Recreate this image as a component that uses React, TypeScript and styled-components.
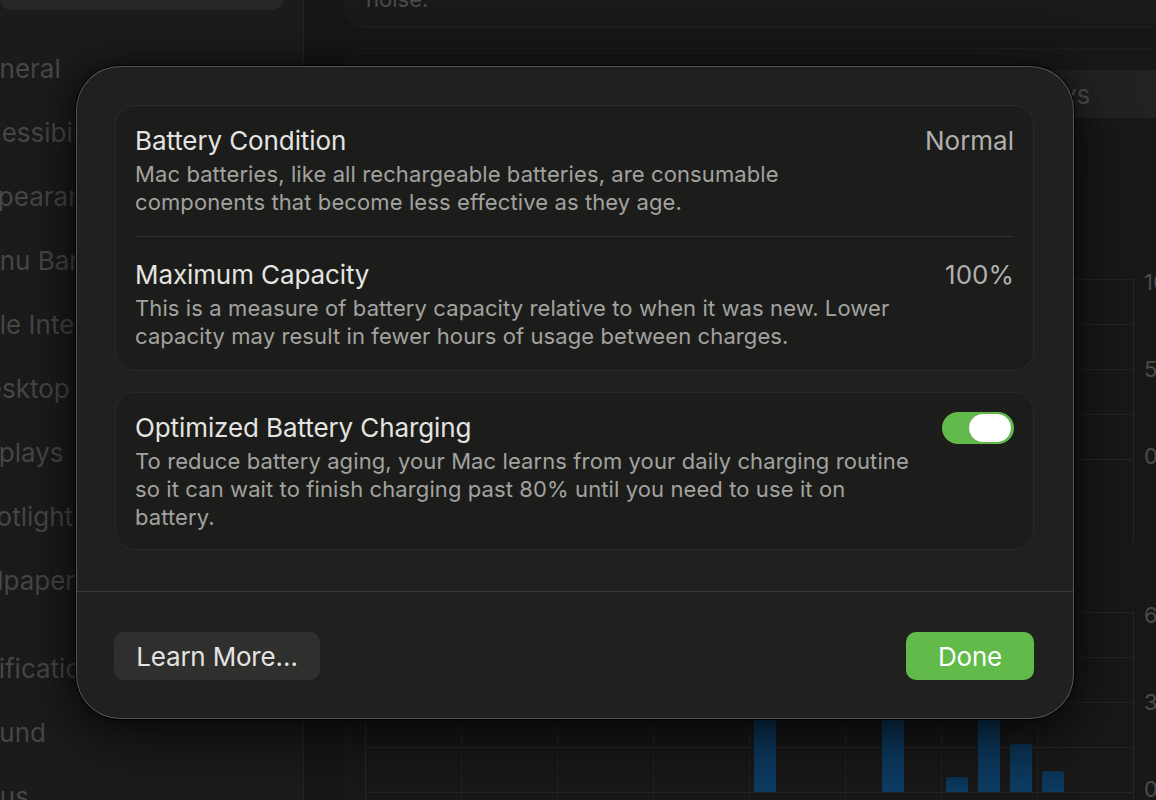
import React from "react";
import styled, { createGlobalStyle } from "styled-components";

const Global = createGlobalStyle`
  html, body { margin: 0; padding: 0; background: #151615; }
  body {
    font-family: Inter, "Noto Sans", "Liberation Sans", sans-serif;
    -webkit-font-smoothing: antialiased;
  }
  #root { width: 1156px; height: 800px; }
  * { box-sizing: border-box; }
`;

const Screen = styled.div`
  position: relative;
  width: 1156px;
  height: 800px;
  overflow: hidden;
  display: flex;
  background: #151615;
`;

/* ---------- background window: sidebar ---------- */
const Sidebar = styled.aside`
  width: 304px;
  flex: none;
  background: #1a1b1a;
  border-right: 1px solid #232423;
  display: flex;
  flex-direction: column;
  overflow: hidden;
`;

const SearchStub = styled.div`
  width: 283px;
  height: 10px;
  flex: none;
  background: #252625;
  border-radius: 0 0 12px 12px;
`;

const SideList = styled.ul`
  list-style: none;
  margin: 27px 0 0;
  padding: 0;
  display: flex;
  flex-direction: column;
`;

const SideItem = styled.li<{ $shift: number; $gapBefore?: boolean }>`
  height: 64px;
  line-height: 64px;
  font-size: 26px;
  color: #464746;
  white-space: nowrap;
  margin-left: ${(p) => -p.$shift}px;
  margin-top: ${(p) => (p.$gapBefore ? "24px" : "0")};
`;

/* ---------- background window: main ---------- */
const Main = styled.main`
  flex: 1;
  min-width: 0;
  padding-left: 41px;
  display: flex;
  flex-direction: column;
  gap: 20px;
  overflow: hidden;
`;

const TopCard = styled.div`
  flex: none;
  width: 900px;
  height: 68px;
  margin-top: -40px;
  padding: 24px 20px 0;
  background: #181918;
  border: 1px solid #1f201f;
  border-radius: 20px;
`;

const DimText = styled.div`
  font-size: 22px;
  line-height: 28px;
  color: #4a4b4a;
  white-space: nowrap;
`;

const ChartCard = styled.section`
  flex: none;
  width: 900px;
  height: 820px;
  padding: 21px 19px 0;
  background: #171817;
  border: 1px solid #1d1e1d;
  border-radius: 20px;
  display: flex;
  flex-direction: column;
`;

const Segmented = styled.div`
  width: 864px;
  height: 48px;
  flex: none;
  display: grid;
  grid-template-columns: 1fr 1fr;
  background: #212221;
  border-radius: 10px;
`;

const Segment = styled.div`
  display: flex;
  align-items: center;
  justify-content: center;
  font-size: 26px;
  color: #4d4e4d;
`;

const ChartSection = styled.div<{ $top: number }>`
  padding-top: ${(p) => p.$top}px;
  display: grid;
  grid-template-columns: 769px auto;
  column-gap: 10px;
  align-items: start;
`;

const Plot = styled.div<{ $axis: number }>`
  display: grid;
  width: 769px;
  grid-template-rows: 181px ${(p) => p.$axis}px;
`;

const HLines = styled.div`
  grid-row: 1;
  grid-column: 1;
  display: flex;
  flex-direction: column;
  border-bottom: 1px solid #252625;
`;

const HLine = styled.div`
  height: 45px;
  border-top: 1px solid #232423;
`;

const VLines = styled.div`
  grid-row: 1 / span 2;
  grid-column: 1;
  display: grid;
  grid-template-columns: repeat(8, 96px);
  border-right: 1px solid #262726;
`;

const VCol = styled.div<{ $solid?: boolean }>`
  border-left: 1px ${(p) => (p.$solid ? "solid" : "dashed")} #262726;
`;

const Bars = styled.div`
  grid-row: 1;
  grid-column: 1;
  height: 180px;
  display: grid;
  grid-template-columns: repeat(24, 32px);
  align-items: end;
`;

const Bar = styled.div`
  width: 22px;
  margin-left: 5px;
  background: linear-gradient(#0b3354, #0d3c63);
  border-radius: 3px 3px 0 0;
`;

const AxisLabels = styled.div`
  height: 196px;
  margin-top: -8px;
  display: flex;
  flex-direction: column;
  justify-content: space-between;
  font-size: 22px;
  line-height: 22px;
  color: #4b4c4b;
  white-space: nowrap;
`;

/* ---------- sheet ---------- */
const Sheet = styled.div`
  position: absolute;
  left: 76px;
  top: 66px;
  width: 998px;
  display: flex;
  flex-direction: column;
  background: #20211e;
  border: 1px solid rgba(255, 255, 255, 0.24);
  border-radius: 44px;
  box-shadow: 0 0 0 1px #000, 0 18px 60px rgba(0, 0, 0, 0.6),
    0 0 24px rgba(0, 0, 0, 0.45);
`;

const SheetBody = styled.div`
  padding: 38px 39px 41px 38px;
  display: flex;
  flex-direction: column;
  gap: 21px;
`;

const Card = styled.div`
  background: #1c1d1a;
  border: 1px solid #2a2b28;
  border-radius: 20px;
  padding: 0 19px;
  display: flex;
  flex-direction: column;
`;

const Row = styled.div<{ $pt: number; $pb: number }>`
  display: flex;
  align-items: flex-start;
  gap: 20px;
  padding: ${(p) => p.$pt}px 0 ${(p) => p.$pb}px;
`;

const RowDivider = styled.div`
  height: 1px;
  background: #30312e;
`;

const TextCol = styled.div`
  flex: 1;
  min-width: 0;
`;

const Title = styled.div`
  font-size: 26px;
  line-height: 32px;
  color: #e4e4e2;
  white-space: nowrap;
  letter-spacing: -0.1px;
`;

const Desc = styled.div`
  margin-top: 3px;
  font-size: 22px;
  line-height: 28px;
  color: #a2a2a0;
  white-space: nowrap;
  letter-spacing: 0.1px;
`;

const Value = styled.div`
  flex: none;
  font-size: 26px;
  line-height: 32px;
  color: #b0b0ae;
`;

const Toggle = styled.div<{ $on: boolean }>`
  flex: none;
  width: 72px;
  height: 32px;
  border-radius: 16px;
  padding: 2px 3px;
  background: ${(p) => (p.$on ? "#62ba4a" : "#3a3b38")};
  display: flex;
  justify-content: ${(p) => (p.$on ? "flex-end" : "flex-start")};
`;

const Knob = styled.div`
  width: 42px;
  height: 28px;
  border-radius: 14px;
  background: #ffffff;
  box-shadow: 0 0 1px rgba(0, 0, 0, 0.3);
`;

const FooterDivider = styled.div`
  height: 1px;
  background: #3b3c39;
`;

const Footer = styled.div`
  display: flex;
  justify-content: space-between;
  align-items: center;
  padding: 40px 39px 38px 37px;
`;

const Button = styled.button<{ $primary?: boolean; $w: number }>`
  width: ${(p) => p.$w}px;
  height: 48px;
  border: none;
  border-radius: 10px;
  font-family: inherit;
  font-size: 26px;
  letter-spacing: -0.2px;
  color: ${(p) => (p.$primary ? "#ffffff" : "#e4e4e2")};
  background: ${(p) => (p.$primary ? "#62ba4a" : "#2f2f2e")};
  display: flex;
  align-items: center;
  justify-content: center;
  padding: 0;
`;

const sidebarItems: { label: string; shift: number; gap?: boolean }[] = [
  { label: "General", shift: 35 },
  { label: "Accessibility", shift: 46 },
  { label: "Appearance", shift: 36 },
  { label: "Menu Bar", shift: 39 },
  { label: "Apple Intelligence", shift: 50 },
  { label: "Desktop & Dock", shift: 32 },
  { label: "Displays", shift: 40 },
  { label: "Spotlight", shift: 36 },
  { label: "Wallpaper", shift: 48 },
  { label: "Notifications", shift: 45, gap: true },
  { label: "Sound", shift: 33 },
  { label: "Focus", shift: 45 },
];

const usage: Record<number, number> = { 12: 40, 16: 45, 18: 5, 19: 33, 20: 16, 21: 7 };

function Chart({ top, axis, labels, bars }: { top: number; axis: number; labels: string[]; bars?: boolean }) {
  return (
    <ChartSection $top={top}>
      <Plot $axis={axis}>
        <HLines>
          <HLine />
          <HLine />
          <HLine />
          <HLine />
        </HLines>
        <VLines>
          {Array.from({ length: 8 }).map((_, i) => (
            <VCol key={i} $solid={i === 0} />
          ))}
        </VLines>
        {bars && (
          <Bars>
            {Array.from({ length: 24 }).map((_, i) => (
              <Bar key={i} style={{ height: (usage[i] || 0) * 3 }} />
            ))}
          </Bars>
        )}
      </Plot>
      <AxisLabels>
        {labels.map((l) => (
          <span key={l}>{l}</span>
        ))}
      </AxisLabels>
    </ChartSection>
  );
}

export default function App() {
  return (
    <>
      <Global />
      <Screen>
        <Sidebar>
          <SearchStub />
          <SideList>
            {sidebarItems.map((it) => (
              <SideItem key={it.label} $shift={it.shift} $gapBefore={it.gap}>
                {it.label}
              </SideItem>
            ))}
          </SideList>
        </Sidebar>

        <Main>
          <TopCard>
            <DimText>noise.</DimText>
          </TopCard>
          <ChartCard>
            <Segmented>
              <Segment>Last 24 Hours</Segment>
              <Segment>Last 10 Days</Segment>
            </Segmented>
            <Chart top={161} axis={82} labels={["100%", "50%", "0%"]} />
            <Chart top={70} axis={60} labels={["60m", "30m", "0m"]} bars />
          </ChartCard>
        </Main>

        <Sheet>
          <SheetBody>
            <Card>
              <Row $pt={19} $pb={20}>
                <TextCol>
                  <Title>Battery Condition</Title>
                  <Desc>
                    Mac batteries, like all rechargeable batteries, are consumable
                    <br />
                    components that become less effective as they age.
                  </Desc>
                </TextCol>
                <Value>Normal</Value>
              </Row>
              <RowDivider />
              <Row $pt={22} $pb={20}>
                <TextCol>
                  <Title>Maximum Capacity</Title>
                  <Desc>
                    This is a measure of battery capacity relative to when it was new. Lower
                    <br />
                    capacity may result in fewer hours of usage between charges.
                  </Desc>
                </TextCol>
                <Value>100%</Value>
              </Row>
            </Card>
            <Card>
              <Row $pt={19} $pb={18}>
                <TextCol>
                  <Title>Optimized Battery Charging</Title>
                  <Desc>
                    To reduce battery aging, your Mac learns from your daily charging routine
                    <br />
                    so it can wait to finish charging past 80% until you need to use it on
                    <br />
                    battery.
                  </Desc>
                </TextCol>
                <Toggle $on>
                  <Knob />
                </Toggle>
              </Row>
            </Card>
          </SheetBody>
          <FooterDivider />
          <Footer>
            <Button $w={206}>Learn More…</Button>
            <Button $primary $w={128}>
              Done
            </Button>
          </Footer>
        </Sheet>
      </Screen>
    </>
  );
}
